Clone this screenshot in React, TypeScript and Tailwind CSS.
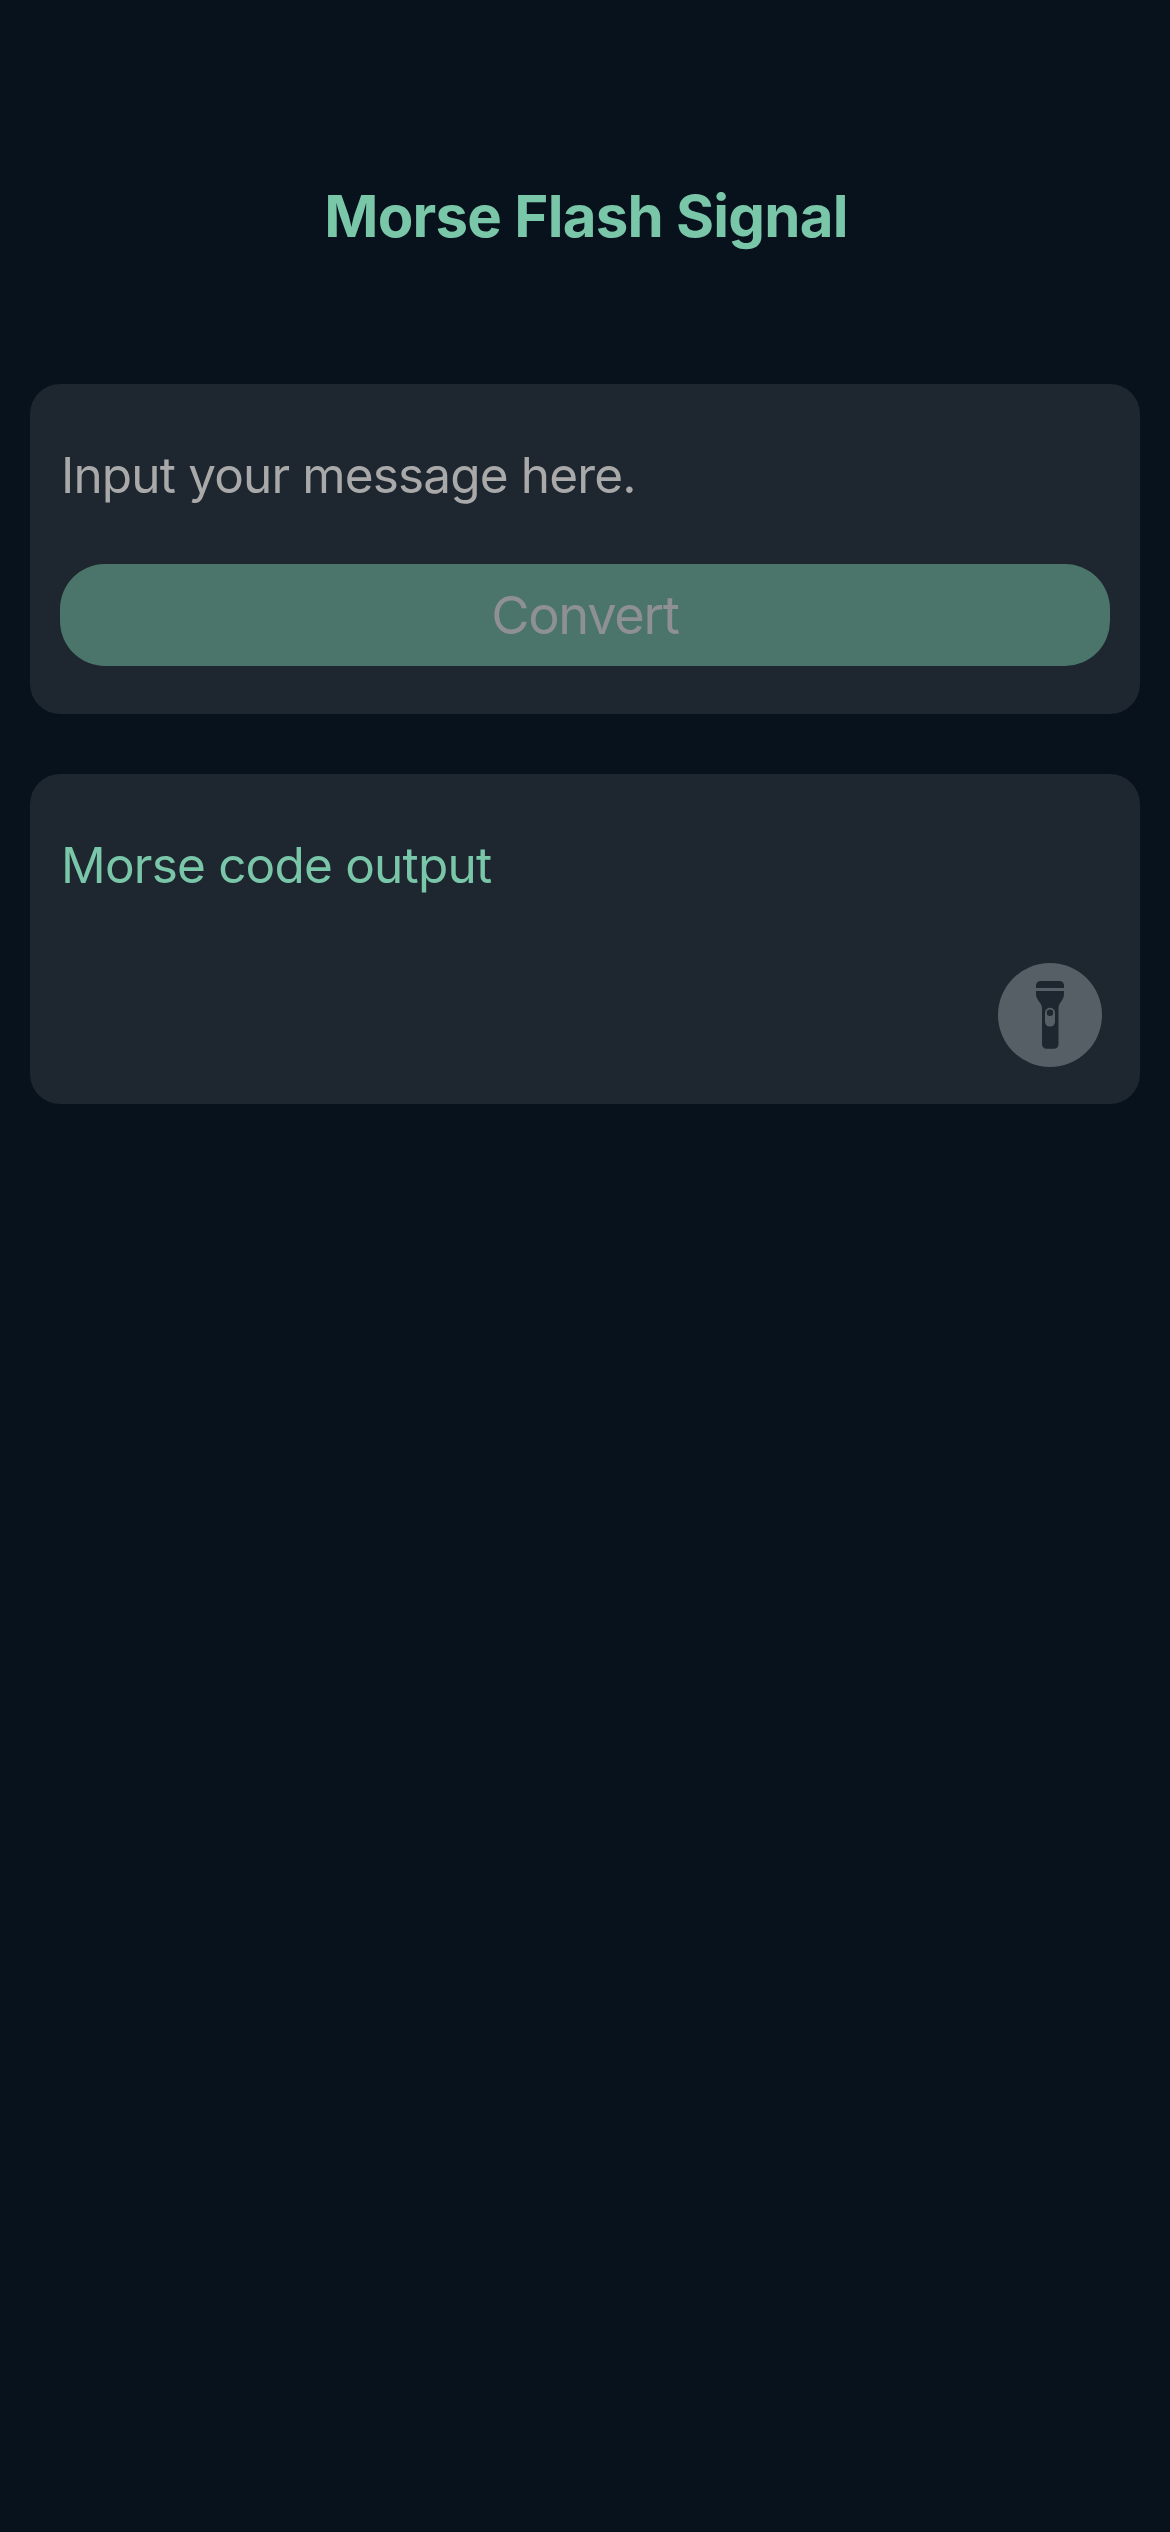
function FlashlightIcon() {
  return (
    <svg viewBox="0 0 104 104" className="size-[104px]" aria-hidden="true">
      <circle cx="52" cy="52" r="52" fill="#575f66" />
      <g fill="#1e262f">
        <path d="M38 25V23.2C38 19.6 39.8 18 43.2 18H60.8C64.2 18 66 19.6 66 23.2V25Z" />
        <path d="M38 28H66V31C66 37.5 60.5 39.5 60.5 45V81C60.5 84.2 58.8 85.8 55.8 85.8H48.7C45.7 85.8 44 84.2 44 81V45C44 39.5 38 37.5 38 31Z" />
      </g>
      <rect x="47" y="44.8" width="10" height="18.8" rx="5" fill="#575f66" />
      <circle cx="52" cy="49.8" r="3.2" fill="#1e262f" />
    </svg>
  );
}

export default function App() {
  return (
    <main className="flex h-[2532px] w-[1170px] flex-col bg-[#07121c] px-[30px] font-[Inter,sans-serif] text-[#79c6a9]">
      <h1 className="mt-[176px] pl-[2px] text-center text-[58.2px] leading-[80px] font-bold tracking-[-0.77px]">Morse Flash Signal</h1>
      <section className="mt-[128px] h-[330px] rounded-[30px] bg-[#1e262f] px-[30px] pt-[60px]">
        <p className="pl-px text-[49.5px] leading-[62px] tracking-[-0.85px] text-[#a9a9a9]">Input your message here.</p>
        <button className="mt-[58px] flex h-[102px] w-full items-center justify-center rounded-[45px] bg-[#4b756a] text-[52.4px] tracking-[-1.3px] text-[#8e9095]">Convert</button>
      </section>
      <section className="mt-[60px] flex h-[330px] flex-col rounded-[30px] bg-[#1e262f] px-[30px] pt-[60px]">
        <p className="pl-px text-[49.5px] leading-[62px] tracking-[-0.8px]">Morse code output</p>
        <button className="mt-[67px] mr-[8px] self-end" aria-label="Flash signal">
          <FlashlightIcon />
        </button>
      </section>
    </main>
  );
}
